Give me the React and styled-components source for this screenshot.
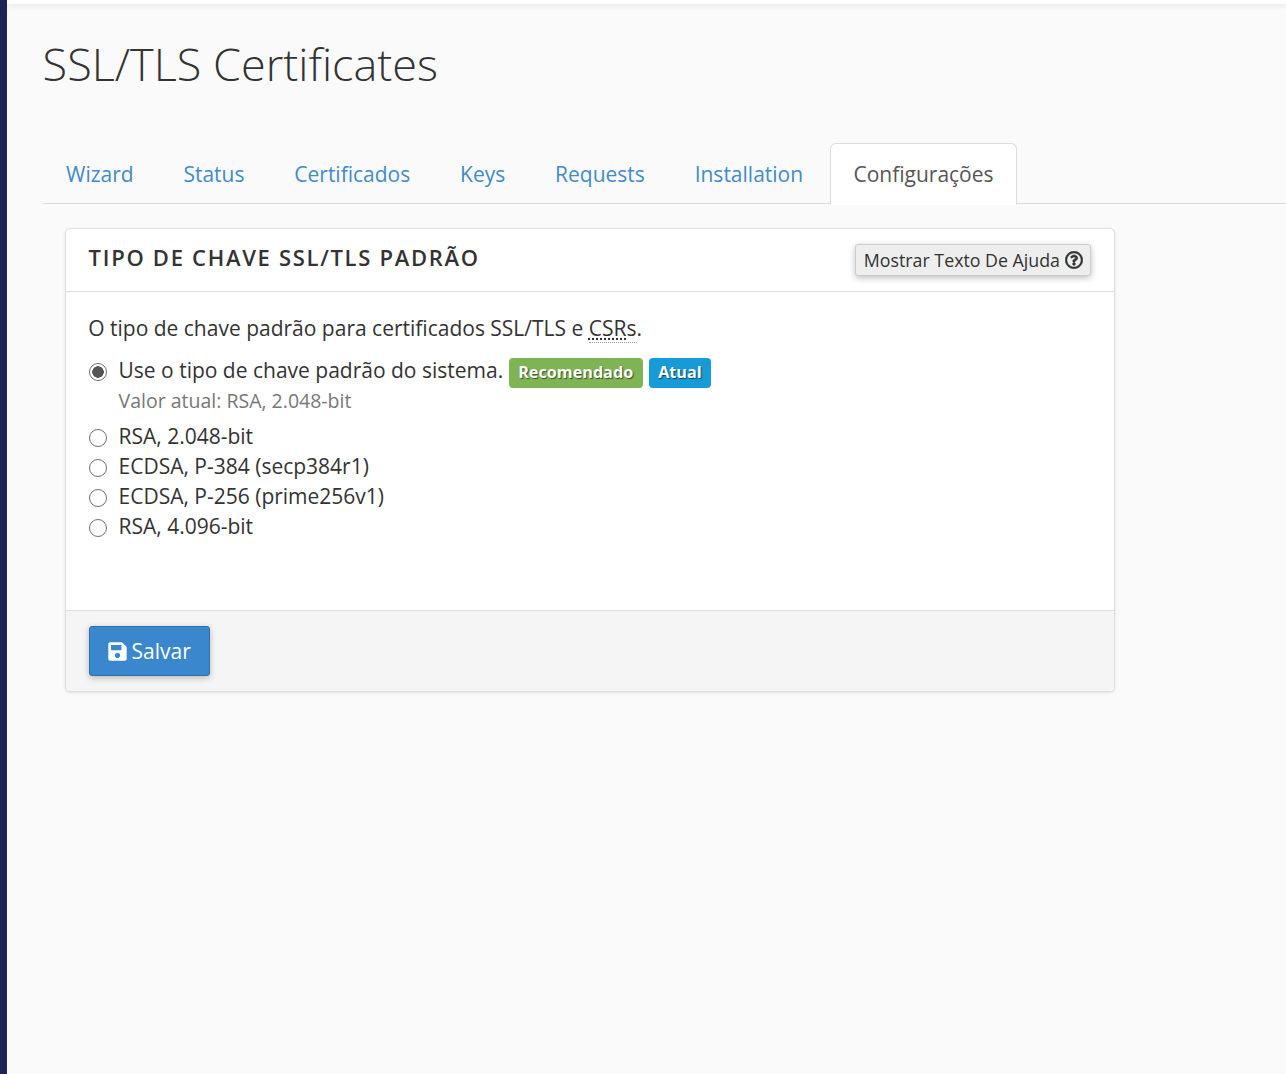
import styled, { createGlobalStyle } from 'styled-components';
import { FaSave, FaRegQuestionCircle } from 'react-icons/fa';

const GlobalStyle = createGlobalStyle`
  html, body {
    margin: 0;
    padding: 0;
    height: 100%;
    background: #fafafa;
  }
  body {
    font-family: "Open Sans", "Noto Sans", sans-serif;
    color: #333;
  }
  * {
    box-sizing: border-box;
  }
`;

const Shell = styled.div`
  display: flex;
  min-height: 1074px;
`;

const SideRail = styled.div`
  width: 7px;
  flex: none;
  background: #1d2456;
`;

const Main = styled.main`
  flex: 1;
  min-width: 0;
`;

const TopBar = styled.div`
  height: 4px;
  background: #fff;
  box-shadow: 0 1px 6px rgba(0, 0, 0, 0.12);
`;

const Content = styled.div`
  padding: 0 0 0 36px;
`;

const Title = styled.h1`
  margin: 0 0 0 -0.4px;
  padding-top: 29px;
  font-size: 45px;
  line-height: 61px;
  font-weight: 300;
  color: #333;
`;

const Tabs = styled.ul`
  display: flex;
  list-style: none;
  margin: 49px 0 0;
  padding: 0;
  height: 61px;
  border-bottom: 1px solid #ddd;
`;

const Tab = styled.li`
  height: 62px;
  padding: 0 ${(p) => (p.$active ? 22.5 : 22)}px;
  margin-right: 3.8px;
  font-size: 21px;
  line-height: 60px;
  color: ${(p) => (p.$active ? '#555' : '#428bca')};
  background: ${(p) => (p.$active ? '#fff' : 'transparent')};
  border: 1px solid ${(p) => (p.$active ? '#ddd' : 'transparent')};
  border-bottom: ${(p) => (p.$active ? '1px solid #fff' : 'none')};
  border-radius: 6px 6px 0 0;
`;

const Panel = styled.section`
  width: 1050px;
  margin: 24px 0 0 22px;
  background: #fff;
  border: 1px solid #e0e0e0;
  border-radius: 5px;
  box-shadow: 0 1px 3px rgba(0, 0, 0, 0.1);
  overflow: hidden;
`;

const PanelHeader = styled.header`
  display: flex;
  align-items: flex-start;
  justify-content: space-between;
  height: 63px;
  padding: 15px 23px 0 23px;
  border-bottom: 1px solid #ddd;
`;

const PanelTitle = styled.h2`
  margin: -1px 0 0 -0.4px;
  font-size: 22px;
  line-height: 28px;
  font-weight: 600;
  letter-spacing: 1.7px;
  color: #333;
`;

const HelpButton = styled.button`
  display: flex;
  align-items: center;
  gap: 5px;
  height: 32px;
  padding: 0 7px 0 8px;
  font: 400 17.8px "Open Sans", sans-serif;
  color: #333;
  background: #eee;
  border: 1px solid #ccc;
  border-radius: 3px;
  box-shadow: 0 2px 6px rgba(0, 0, 0, 0.25);
  svg {
    width: 18px;
    height: 18px;
    stroke: currentColor;
    stroke-width: 14px;
  }
`;

const PanelBody = styled.div`
  height: 318px;
  padding: 21px 23px 0;
`;

const Intro = styled.p`
  margin: 0 0 12px -0.8px;
  font-size: 21px;
  line-height: 30px;
`;

const AbbrGroup = styled.span`
  border-bottom: 1px dotted #999;
`;

const Abbr = styled.abbr`
  text-decoration: underline dotted #333;
`;

const OptionRow = styled.label`
  display: flex;
  align-items: center;
  gap: 11.5px;
  height: 30px;
  font-size: 21px;
  line-height: 30px;
`;

const Radio = styled.span`
  width: 18px;
  height: 18px;
  margin-top: 3px;
  flex: none;
  border-radius: 50%;
  border: 1.5px solid #6e6e6e;
  background: ${(p) =>
    p.$checked ? 'radial-gradient(circle, #555 0 5.5px, #fff 6px)' : '#fff'};
`;

const Hint = styled.div`
  margin: 1px 0 5px 29.6px;
  font-size: 19.5px;
  line-height: 30px;
  color: #777;
`;

const Badges = styled.span`
  display: flex;
  gap: 6px;
  margin: 6px 0 0 -6px;
`;

const Label = styled.span`
  height: 30px;
  padding: 0 9.5px;
  font-size: 16.2px;
  font-weight: 700;
  line-height: 28px;
  color: #fff;
  text-shadow: 1px 1px 1px rgba(0, 0, 0, 0.55);
  background: ${(p) => p.$color};
  border-radius: 4px;
`;

const PanelFooter = styled.footer`
  height: 81px;
  padding: 15px 23px;
  background: #f5f5f5;
  border-top: 1px solid #ddd;
`;

const SaveButton = styled.button`
  display: flex;
  align-items: center;
  gap: 5px;
  height: 50px;
  padding: 0 18.4px 0 17.5px;
  font: 400 21px "Open Sans", sans-serif;
  color: #fff;
  background: #3a87cd;
  border: 1px solid #2b6fae;
  border-radius: 3px;
  box-shadow: 0 2px 6px rgba(0, 0, 0, 0.25);
  svg {
    width: 19px;
    height: 21px;
  }
`;

const tabs = ['Wizard', 'Status', 'Certificados', 'Keys', 'Requests', 'Installation'];
const options = ['RSA, 2.048-bit', 'ECDSA, P-384 (secp384r1)', 'ECDSA, P-256 (prime256v1)', 'RSA, 4.096-bit'];

const App = () => {
  return (
    <>
      <GlobalStyle />
      <Shell>
        <SideRail />
        <Main>
          <TopBar />
          <Content>
            <Title>SSL/TLS Certificates</Title>
            <Tabs>
              {tabs.map((t) => (
                <Tab key={t}>{t}</Tab>
              ))}
              <Tab $active>Configurações</Tab>
            </Tabs>
            <Panel>
              <PanelHeader>
                <PanelTitle>TIPO DE CHAVE SSL/TLS PADRÃO</PanelTitle>
                <HelpButton>
                  Mostrar Texto De Ajuda <FaRegQuestionCircle />
                </HelpButton>
              </PanelHeader>
              <PanelBody>
                <Intro>
                  O tipo de chave padrão para certificados SSL/TLS e <AbbrGroup><Abbr>CSR</Abbr>s</AbbrGroup>.
                </Intro>
                <OptionRow>
                  <Radio $checked />
                  <span>Use o tipo de chave padrão do sistema.</span>
                  <Badges>
                    <Label $color="#7fb454">Recomendado</Label>
                    <Label $color="#169bd8">Atual</Label>
                  </Badges>
                </OptionRow>
                <Hint>Valor atual: RSA, 2.048-bit</Hint>
                {options.map((o) => (
                  <OptionRow key={o}>
                    <Radio />
                    <span>{o}</span>
                  </OptionRow>
                ))}
              </PanelBody>
              <PanelFooter>
                <SaveButton>
                  <FaSave /> Salvar
                </SaveButton>
              </PanelFooter>
            </Panel>
          </Content>
        </Main>
      </Shell>
    </>
  );
};

export default App;
